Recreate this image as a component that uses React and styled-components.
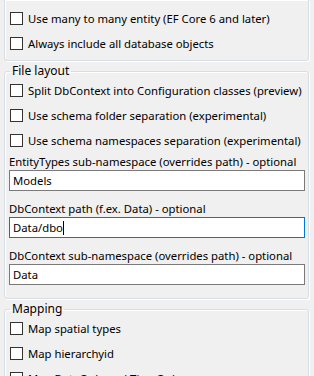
import styled, { createGlobalStyle } from "styled-components";

const GlobalStyle = createGlobalStyle`
  html, body {
    margin: 0;
    padding: 0;
    background: #f0f0f0;
    overflow: hidden;
  }
  body {
    font-family: "Noto Sans", "Segoe UI", sans-serif;
    font-size: 11.3px;
    color: #000;
  }
`;

const Page = styled.div`
  width: 314px;
  height: 376px;
  padding: 0 5px 0 4px;
  box-sizing: border-box;
  display: flex;
  flex-direction: column;
  overflow: hidden;
`;

const Group = styled.fieldset`
  margin: ${(p) => (p.$cut ? "0" : "3px 0 0")};
  padding: ${(p) => (p.$cut ? "6px 3px 4px 4px" : "0 3px 13px 4px")};
  border: 1px solid #d5dfe5;
  border-top: ${(p) => (p.$cut ? "none" : "1px solid #d5dfe5")};
  border-radius: ${(p) => (p.$cut ? "0 0 3px 3px" : "3px")};
  box-shadow: inset 1px 1px 0 #fff, 1px 1px 0 #fff;
  display: flex;
  flex-direction: column;
  min-width: 0;
  flex-shrink: 0;
`;

const Legend = styled.legend`
  padding: 0 2px;
  margin-left: 1px;
  line-height: 14px;
  font-size: 12px;
`;

const CheckRow = styled.label`
  display: flex;
  align-items: center;
  gap: 5px;
  height: 25px;
  margin-left: 1px;
  white-space: nowrap;
`;

const Box = styled.span`
  width: 13px;
  height: 13px;
  box-sizing: border-box;
  border: 1px solid #333;
  background: #fff;
  flex-shrink: 0;
`;

const FieldLabel = styled.div`
  line-height: 16px;
  margin-top: ${(p) => (p.$first ? "1px" : "10px")};
  white-space: nowrap;
`;

const TextBox = styled.div`
  height: 21px;
  box-sizing: border-box;
  border: 1px solid ${(p) => (p.$focused ? "#0078d7" : "#7a7a7a")};
  background: #fff;
  padding: 0 3px;
  display: flex;
  align-items: center;
  line-height: 19px;
`;

const Caret = styled.span`
  display: inline-block;
  width: 1px;
  height: 14px;
  background: #000;
`;

function Check({ children }) {
  return (
    <CheckRow>
      <Box />
      <span>{children}</span>
    </CheckRow>
  );
}

export default function App() {
  return (
    <>
      <GlobalStyle />
      <Page>
        <Group $cut>
          <Check>Use many to many entity (EF Core 6 and later)</Check>
          <Check>Always include all database objects</Check>
        </Group>

        <Group>
          <Legend>File layout</Legend>
          <Check>Split DbContext into Configuration classes (preview)</Check>
          <Check>Use schema folder separation (experimental)</Check>
          <Check>Use schema namespaces separation (experimental)</Check>
          <FieldLabel $first>EntityTypes sub-namespace (overrides path) - optional</FieldLabel>
          <TextBox>Models</TextBox>
          <FieldLabel>DbContext path (f.ex. Data) - optional</FieldLabel>
          <TextBox $focused>
            Data/dbo
            <Caret />
          </TextBox>
          <FieldLabel>DbContext sub-namespace (overrides path) - optional</FieldLabel>
          <TextBox>Data</TextBox>
        </Group>

        <Group>
          <Legend>Mapping</Legend>
          <Check>Map spatial types</Check>
          <Check>Map hierarchyid</Check>
          <Check>Map DateOnly and TimeOnly</Check>
        </Group>
      </Page>
    </>
  );
}
